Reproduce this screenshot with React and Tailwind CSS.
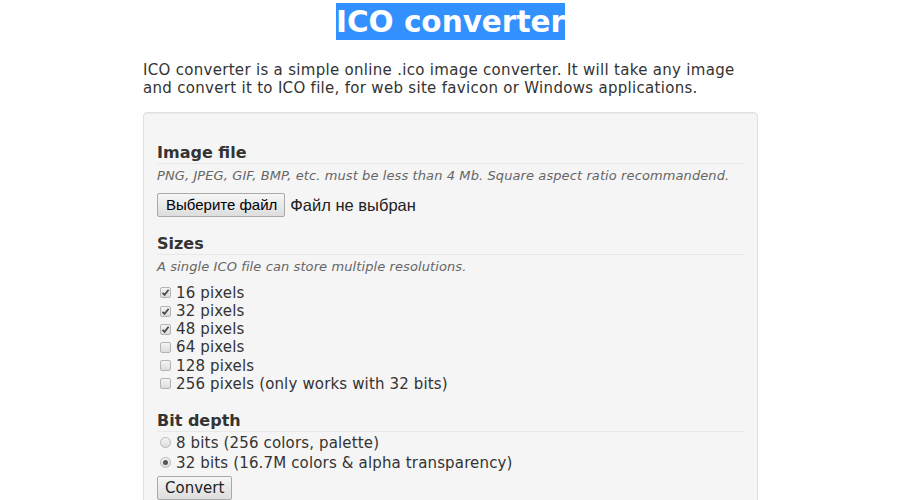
import { useState } from "react";

const SIZES = [
  { label: "16 pixels", on: true },
  { label: "32 pixels", on: true },
  { label: "48 pixels", on: true },
  { label: "64 pixels", on: false },
  { label: "128 pixels", on: false },
  { label: "256 pixels (only works with 32 bits)", on: false },
];

function Check({ on }) {
  return (
    <span className="w-[11px] h-[11px] mr-[5px] border border-[#b4b4b4] rounded-[2px] bg-gradient-to-b from-[#f4f4f4] to-[#dcdcdc] flex items-center justify-center shrink-0">
      {on && (
        <svg width="9" height="9" viewBox="0 0 9 9">
          <path d="M1.5 4.8 L3.6 6.9 L7.6 1.8" fill="none" stroke="#4a4a4a" strokeWidth="1.8" />
        </svg>
      )}
    </span>
  );
}

function Radio({ on }) {
  return (
    <span className="w-[11px] h-[11px] mr-[5px] border border-[#b8b8b8] rounded-full bg-gradient-to-b from-[#f4f4f4] to-[#dcdcdc] flex items-center justify-center shrink-0">
      {on && <span className="w-[5px] h-[5px] rounded-full bg-[#555]" />}
    </span>
  );
}

function Section({ title, children }) {
  return (
    <div>
      <h3 className="text-[16px] font-bold text-[#333] leading-[20px] border-b border-[#e8e8e8]">{title}</h3>
      {children}
    </div>
  );
}

export default function App() {
  const [sizes, setSizes] = useState(SIZES.map((s) => s.on));
  const [depth, setDepth] = useState(32);

  return (
    <div className="w-[901px] bg-white text-[#333] font-['DejaVu_Sans',Verdana,sans-serif]">
      <div className="w-[615px] mx-auto">
        <h1 className="text-center pt-[3px] text-[29.5px] font-bold leading-[37px]">
          <span className="inline-block h-[37px] leading-[38px] bg-[#3390ff] text-white">ICO converter</span>
        </h1>

        <p className="mt-[20px] text-[15px] leading-[18px] tracking-[0.3px]">
          ICO converter is a simple online .ico image converter. It will take any image and convert it to ICO file, for web site favicon or Windows applications.
        </p>

        <div className="mt-[15px] bg-[#f5f5f5] border border-[#e0e0e0] rounded-[4px] shadow-[inset_0_1px_1px_rgba(0,0,0,0.05)] px-[13px] pt-[30px] pb-6">
          <Section title="Image file">
            <p className="mt-[3px] text-[13px] italic text-[#666] leading-[18px] tracking-[0.1px]">
              PNG, JPEG, GIF, BMP, etc. must be less than 4 Mb. Square aspect ratio recommandend.
            </p>
            <div className="mt-[8px] flex items-center font-['Liberation_Sans',Arial,sans-serif]">
              <button className="h-[24px] pl-[8px] pr-[7px] border border-[#a9a9a9] rounded-[2px] bg-gradient-to-b from-[#f6f6f6] to-[#dddddd] text-[15px] text-black">
                Выберите файл
              </button>
              <span className="ml-[5px] text-[16.5px] text-[#222]">Файл не выбран</span>
            </div>
          </Section>

          <div className="mt-[16px]">
            <Section title="Sizes">
              <p className="mt-[3px] text-[13px] italic text-[#666] leading-[18px] tracking-[0.1px]">
                A single ICO file can store multiple resolutions.
              </p>
              <div className="mt-[8px] pl-[3px] flex flex-col text-[15px] leading-[18.2px] tracking-[0.15px]">
                {SIZES.map((s, i) => (
                  <label
                    key={s.label}
                    className="flex items-center cursor-pointer"
                    onClick={() => setSizes(sizes.map((v, j) => (j === i ? !v : v)))}
                  >
                    <Check on={sizes[i]} />
                    {s.label}
                  </label>
                ))}
              </div>
            </Section>
          </div>

          <div className="mt-[18px]">
            <Section title="Bit depth">
              <div className="mt-[1px] pl-[3px] flex flex-col text-[15px] leading-[20px] tracking-[0.15px]">
                <label className="flex items-center cursor-pointer" onClick={() => setDepth(8)}>
                  <Radio on={depth === 8} />
                  8 bits (256 colors, palette)
                </label>
                <label className="flex items-center cursor-pointer" onClick={() => setDepth(32)}>
                  <Radio on={depth === 32} />
                  32 bits (16.7M colors &amp; alpha transparency)
                </label>
              </div>
              <button className="mt-[3px] h-[24px] px-[7px] border border-[#a9a9a9] rounded-[2px] bg-gradient-to-b from-[#f6f6f6] to-[#dddddd] text-[15px] text-[#222]">
                Convert
              </button>
            </Section>
          </div>
        </div>
      </div>
    </div>
  );
}
